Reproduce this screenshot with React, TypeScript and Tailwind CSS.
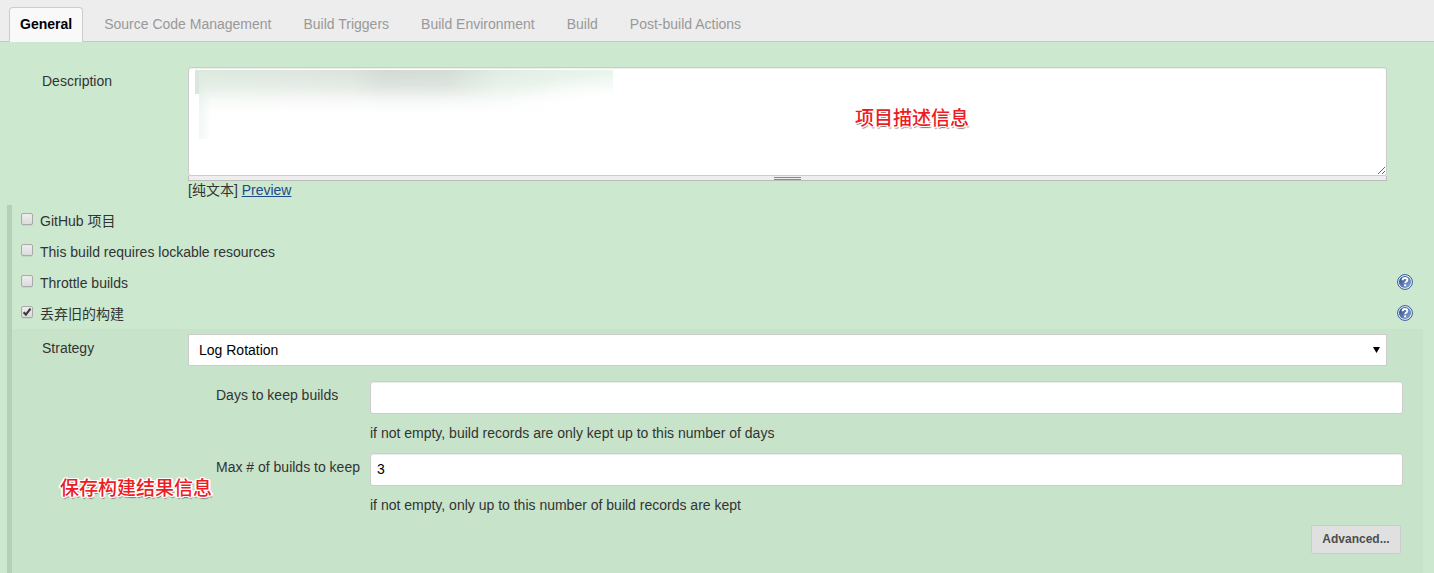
import { useState } from 'react';

const tabs = ['Source Code Management', 'Build Triggers', 'Build Environment', 'Build', 'Post-build Actions'];

const options = [
  { id: 'github', label: 'GitHub 项目', checked: false, help: false },
  { id: 'lockable', label: 'This build requires lockable resources', checked: false, help: false },
  { id: 'throttle', label: 'Throttle builds', checked: false, help: true },
  { id: 'discard', label: '丢弃旧的构建', checked: true, help: true },
];

const retention = [
  { id: 'days', label: 'Days to keep builds', value: '', hint: 'if not empty, build records are only kept up to this number of days' },
  { id: 'max', label: 'Max # of builds to keep', value: '3', hint: 'if not empty, only up to this number of build records are kept' },
];

const noteClass =
  'pointer-events-none absolute whitespace-nowrap text-[19px] font-medium leading-6 text-[#ed1c24] [text-shadow:1px_0_#fff,-1px_0_#fff,0_1px_#fff,0_-1px_#fff,1px_1px_#fff,-1px_-1px_#fff,1px_-1px_#fff,-1px_1px_#fff,2px_0_#fff,-2px_0_#fff,1px_2px_1px_#777]';

function HelpIcon() {
  return (
    <svg viewBox="0 0 16 16" className="h-4 w-4">
      <defs>
        <linearGradient id="help-fill" x1="0" y1="0" x2="1" y2="1">
          <stop offset="0" stopColor="#204a87" />
          <stop offset="1" stopColor="#8faadb" />
        </linearGradient>
      </defs>
      <circle cx="8" cy="8" r="7.4" fill="#f4f8fc" stroke="#2f5596" strokeWidth="1" />
      <circle cx="8" cy="8" r="6.1" fill="url(#help-fill)" />
      <path d="M5.6 6.2C5.6 4.6 6.7 4 8 4s2.4.7 2.4 2c0 1.6-2.2 1.5-2.2 3.3" fill="none" stroke="#fff" strokeWidth="1.9" />
      <path d="M7.1 10.4h2.1v1.9H7.1z" fill="#fff" />
    </svg>
  );
}

function Option({ id, label, checked, help }: (typeof options)[number]) {
  const [on, setOn] = useState(checked);
  return (
    <div className="flex h-[31px] items-center justify-between pr-[21px] pl-[9px]">
      <div className="flex items-center gap-[7px]">
        <span className="relative mb-1 h-3 w-3">
          <input
            id={id}
            type="checkbox"
            checked={on}
            onChange={() => setOn(!on)}
            className="block h-3 w-3 appearance-none rounded-[2px] border border-[#a9a9a9] bg-linear-to-b from-[#ededed] to-[#dcdcdc] shadow-[0_1px_0_rgba(0,0,0,0.06)]"
          />
          {on && (
            <svg viewBox="0 0 12 12" className="pointer-events-none absolute inset-0 h-3 w-3">
              <path d="M2.6 6.2l2.3 2.4 4.6-6" fill="none" stroke="#3c3c3c" strokeWidth="2.2" />
            </svg>
          )}
        </span>
        <label htmlFor={id}>{label}</label>
      </div>
      {help && (
        <button type="button" aria-label={`Help: ${label}`} className="mb-[2px]">
          <HelpIcon />
        </button>
      )}
    </div>
  );
}

export default function App() {
  return (
    <div className="flex min-h-screen flex-col bg-[#cce8cf] font-['Liberation_Sans','Noto_Sans_CJK_SC',sans-serif] text-sm leading-[18px] text-[#333]">
      <nav className="flex h-[42px] items-end border-b border-[#c8c8c8] bg-[#ededed] pl-[9px] text-[#999]">
        <a href="#general" className="-mb-px flex h-[35px] items-center rounded-t border border-b-0 border-[#ccc] bg-[#f9f9f9] px-[10px] pb-[2px] font-bold text-black">
          General
        </a>
        <div className="flex h-[35px] items-center gap-8 pl-[21px]">
          {tabs.map((tab) => (
            <a key={tab} href="#section">{tab}</a>
          ))}
        </div>
      </nav>

      <form className="flex grow flex-col">
        <div className="flex pt-[25px] pr-[47px] pb-[6px] pl-[42px]">
          <label htmlFor="description" className="w-[146px] shrink-0 pt-[5px]">Description</label>
          <div className="grow">
            <div className="relative">
              <textarea
                id="description"
                className="block h-[109px] w-full resize-y rounded-[3px] border border-[#ccc] bg-white p-[6px] shadow-[inset_0_1px_1px_rgba(0,0,0,0.075)] outline-none"
              />
              {/* redacted project description */}
              <div className="pointer-events-none absolute top-[3px] left-[7px] h-6 w-1 bg-[#dbe7de]" />
              <div className="pointer-events-none absolute top-[3px] left-[11px] h-[69px] w-3 bg-linear-to-r from-[#f1f7f5] to-transparent" />
              <div className="pointer-events-none absolute top-[3px] left-[11px] h-11 w-[414px] bg-[linear-gradient(to_right,#dbe9dd,#dde5de_100px,#dbe3dc_150px,#d2dad3_185px,#d3dcd5_250px,#e0ede3_300px,#e9f5ec)] [mask-image:linear-gradient(to_bottom,#000,rgba(0,0,0,0.75)_35%,rgba(0,0,0,0.2)_70%,transparent)]" />
              <div className="pointer-events-none absolute top-[3px] left-[261px] h-11 w-[164px] bg-[radial-gradient(ellipse_120px_40px_at_164px_44px,#fff_40%,transparent)]" />
              <span className={`${noteClass} top-10 left-[667px]`}>项目描述信息</span>
            </div>
            <div className="flex h-[5px] items-center justify-center border-b border-l border-r border-[#bbb] bg-[#eee]">
              <div className="h-[3px] w-[27px] border-y border-[#888]" />
            </div>
            <p>
              [纯文本] <a href="#preview" className="text-[#204a87] underline">Preview</a>
            </p>
          </div>
        </div>

        <div className="ml-[7px] flex grow flex-col border-l-[5px] border-[#b5d0b8]">
          {options.map((option) => (
            <Option key={option.id} {...option} />
          ))}

          <section className="relative mr-[11px] grow bg-[#c7e3ca] pt-[5px] pb-5">
            <div className="flex pr-9 pl-[30px]">
              <label htmlFor="strategy" className="w-[146px] shrink-0 pt-[5px]">Strategy</label>
              <div className="relative grow">
                <select id="strategy" className="block h-8 w-full appearance-none border border-[#ccc] bg-white px-[10px] text-black">
                  <option>Log Rotation</option>
                </select>
                <svg viewBox="0 0 7 6" className="pointer-events-none absolute top-[13px] right-[7px] h-[6px] w-[7px]">
                  <path d="M0 0h7L3.5 6z" fill="#000" />
                </svg>
              </div>
            </div>

            <div className="pt-[15px] pr-5 pl-[204px]">
              {retention.map((field) => (
                <div key={field.id} className="flex">
                  <label htmlFor={field.id} className="w-[154px] shrink-0 pt-[5px]">{field.label}</label>
                  <div className="grow">
                    <input
                      id={field.id}
                      type="text"
                      defaultValue={field.value}
                      className="block h-[33px] w-full rounded-[3px] border border-[#ccc] bg-white px-[6px] pb-[2px] text-black shadow-[inset_0_1px_1px_rgba(0,0,0,0.075)] outline-none"
                    />
                    <p className="flex h-[39px] items-center pb-[2px]">{field.hint}</p>
                  </div>
                </div>
              ))}
            </div>

            <div className="flex justify-end pr-[22px]">
              <button type="button" className="h-[29px] w-[90px] rounded-[2px] border border-[#ccc] bg-[#e0e0e0] pb-[2px] text-xs font-bold text-[#4d4d4d]">
                Advanced...
              </button>
            </div>

            <span className={`${noteClass} top-[148px] left-[48px]`}>保存构建结果信息</span>
          </section>
        </div>
      </form>
    </div>
  );
}
